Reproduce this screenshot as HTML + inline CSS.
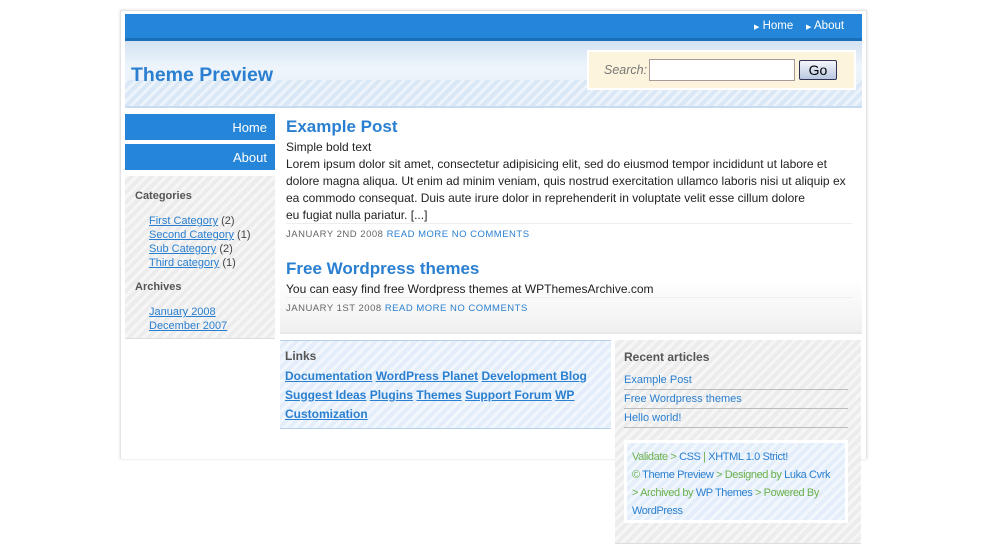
<!DOCTYPE html>
<html><head><meta charset="utf-8"><style>
*{margin:0;padding:0;box-sizing:border-box}
body{width:1007px;height:554px;background:#fff;font-family:"Liberation Sans",Arial,sans-serif;position:relative;overflow:hidden}
.abs{position:absolute}
a{color:#2a7fd0}
.stripes{background-image:repeating-linear-gradient(135deg,rgba(255,255,255,.55) 0 3px,transparent 3px 7px)}
</style></head><body>
<div class="abs" style="left:120px;top:10px;width:747px;height:449px;border:1px solid #e4e4e4;border-bottom:none;box-shadow:0 0 3px #ddd"></div>
<div class="abs" style="left:125px;top:14px;width:737px;height:27px;background:#2586d9;border-bottom:3px solid #1a6fba"></div>
<div class="abs" style="left:754px;top:20px;font-size:11.5px;color:#fff"><span style="font-size:7px">▶</span> Home &nbsp;&nbsp;&nbsp;<span style="font-size:7px">▶</span> About</div>
<div class="abs" style="left:125px;top:41px;width:737px;height:67px;background:linear-gradient(#d3e2f2,#eef4fb 40%,#e6eff9);border-bottom:2px solid #c9dcef"></div>
<div class="abs stripes" style="left:125px;top:80px;width:737px;height:26px;opacity:.9;background-color:#d9e7f6"></div>
<div class="abs" style="left:131px;top:64px;font-size:19.5px;font-weight:bold;color:#2a7fd0">Theme Preview</div>
<div class="abs" style="left:587px;top:50px;width:269px;height:40px;background:#fdf4dd;border:2px solid #fff"></div>
<div class="abs" style="left:604px;top:63px;font-size:12.5px;font-style:italic;color:#777">Search:</div>
<div class="abs" style="left:649px;top:59px;width:146px;height:22px;border:1px solid #a99;background:#fff"></div>
<div class="abs" style="left:799px;top:60px;width:38px;height:20px;border:1px solid #335;border-radius:2px;background:linear-gradient(#f4f6fb,#b9c8e0);font-size:14px;text-align:center;line-height:18px">Go</div>
<div class="abs" style="left:125px;top:114px;width:150px;height:26px;background:#2586d9;color:#fff;font-size:13px;text-align:right;padding:6px 8px 0 0">Home</div>
<div class="abs" style="left:125px;top:144px;width:150px;height:26px;background:#2586d9;color:#fff;font-size:13px;text-align:right;padding:6px 8px 0 0">About</div>
<div class="abs stripes" style="left:125px;top:174px;width:150px;height:165px;background-color:#ececec;border-top:2px solid #fff;border-bottom:1px solid #ddd"></div>
<div class="abs" style="left:135px;top:190px;font-size:11px;font-weight:bold;color:#555">Categories</div>
<div class="abs" style="left:149px;top:214px;font-size:11px;line-height:14px;color:#444"><a href="#">First Category</a> (2)<br><a href="#">Second Category</a> (1)<br><a href="#">Sub Category</a> (2)<br><a href="#">Third category</a> (1)</div>
<div class="abs" style="left:135px;top:281px;font-size:11px;font-weight:bold;color:#555">Archives</div>
<div class="abs" style="left:149px;top:305px;font-size:11px;line-height:14px"><a href="#">January 2008</a><br><a href="#">December 2007</a></div>
<div class="abs" style="left:280px;top:280px;width:582px;height:54px;background:linear-gradient(#fff,#f0f0f0);border-bottom:2px solid #e8e8e8"></div>
<div class="abs" style="left:286px;top:117px;font-size:17px;font-weight:bold;color:#2a7fd0">Example Post</div>
<div class="abs" style="left:286px;top:139px;width:566px;font-size:12px;line-height:17px;color:#222">Simple bold text<br>Lorem ipsum dolor sit amet, consectetur adipisicing elit, sed do eiusmod tempor incididunt ut labore et dolore magna aliqua. Ut enim ad minim veniam, quis nostrud exercitation ullamco laboris nisi ut aliquip ex ea commodo consequat. Duis aute irure dolor in reprehenderit in voluptate velit esse cillum dolore<br>eu fugiat nulla pariatur. [...]</div>
<div class="abs" style="left:286px;top:223px;width:566px;border-top:1px solid #eee;padding-top:5px;font-size:9.5px;letter-spacing:.5px;color:#666">JANUARY 2ND 2008 <span style="color:#2a7fd0">READ MORE NO COMMENTS</span></div>
<div class="abs" style="left:286px;top:259px;font-size:17px;font-weight:bold;color:#2a7fd0">Free Wordpress themes</div>
<div class="abs" style="left:286px;top:282px;font-size:12px;color:#222">You can easy find free Wordpress themes at WPThemesArchive.com</div>
<div class="abs" style="left:286px;top:297px;width:566px;border-top:1px solid #eee;padding-top:5px;font-size:9.5px;letter-spacing:.5px;color:#666">JANUARY 1ST 2008 <span style="color:#2a7fd0">READ MORE NO COMMENTS</span></div>
<div class="abs stripes" style="left:280px;top:340px;width:331px;height:89px;background-color:#e3eefa;border-top:1px solid #b9d0ea;border-bottom:1px solid #b9d0ea"></div>
<div class="abs" style="left:285px;top:349px;font-size:12px;font-weight:bold;color:#555">Links</div>
<div class="abs" style="left:285px;top:367px;width:320px;font-size:12px;font-weight:bold;line-height:19px"><a href="#">Documentation</a> <a href="#">WordPress Planet</a> <a href="#">Development Blog</a> <a href="#">Suggest Ideas</a> <a href="#">Plugins</a> <a href="#">Themes</a> <a href="#">Support Forum</a> <a href="#">WP Customization</a></div>
<div class="abs stripes" style="left:615px;top:340px;width:246px;height:204px;background-color:#ececec;border-bottom:1px solid #ddd"></div>
<div class="abs" style="left:624px;top:350px;font-size:12px;font-weight:bold;color:#555">Recent articles</div>
<div class="abs" style="left:624px;top:371px;width:224px;font-size:11px;line-height:18px">
<div style="border-bottom:1px solid #bbb"><a href="#" style="text-decoration:none">Example Post</a></div>
<div style="border-bottom:1px solid #bbb"><a href="#" style="text-decoration:none">Free Wordpress themes</a></div>
<div style="border-bottom:1px solid #bbb"><a href="#" style="text-decoration:none">Hello world!</a></div></div>
<div class="abs stripes" style="left:624px;top:440px;width:224px;height:83px;background-color:#e3eefa;border:3px solid #fff;padding:5px 5px;font-size:11px;letter-spacing:-.4px;line-height:18px;color:#6ab04c;white-space:nowrap">Validate &gt; <span style="color:#2a7fd0">CSS</span> | <span style="color:#2a7fd0">XHTML 1.0 Strict!</span><br>© <span style="color:#2a7fd0">Theme Preview</span> &gt; Designed by <span style="color:#2a7fd0">Luka Cvrk</span><br>&gt; Archived by <span style="color:#2a7fd0">WP Themes</span> &gt; Powered By<br><span style="color:#2a7fd0">WordPress</span></div>
</body></html>
